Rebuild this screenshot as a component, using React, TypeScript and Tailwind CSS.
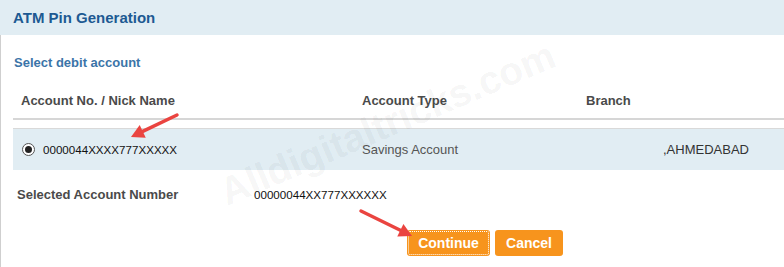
import { useState } from 'react';

const Arrow = ({ x1, y1, x2, y2 }: { x1: number; y1: number; x2: number; y2: number }) => {
  const a = Math.atan2(y2 - y1, x2 - x1);
  const len = 13;
  const w = 7;
  const bx = x2 - len * Math.cos(a);
  const by = y2 - len * Math.sin(a);
  const px = -Math.sin(a) * w;
  const py = Math.cos(a) * w;
  return (
    <g>
      <line x1={x1} y1={y1} x2={bx} y2={by} stroke="#ea4440" strokeWidth={3.5} strokeLinecap="round" />
      <polygon points={`${x2},${y2} ${bx + px},${by + py} ${bx - px},${by - py}`} fill="#ea4440" />
    </g>
  );
};

const App = () => {
  const [selected, setSelected] = useState(true);

  return (
    <div className="relative w-[784px] h-[267px] overflow-hidden bg-white font-['Liberation_Sans',Arial,sans-serif]">
      {/* Header */}
      <div className="h-[35px] bg-[#e1edf3] flex items-center pl-[13px]">
        <h1 className="text-[15px] leading-[18px] font-bold text-[#1d5a92]">ATM Pin Generation</h1>
      </div>

      <div className="h-[232px] border-l border-[#cfcfcf]">
        <div className="pl-[13px] pt-[18px] text-[13px] leading-[19px] font-bold text-[#3b74a8]">Select debit account</div>

        {/* Table */}
        <div className="ml-[12px] mt-[19px]">
          <div className="grid grid-cols-[349px_224px_1fr] h-[29px] items-start border-b-2 border-[#d6d6d6] text-[13px] leading-[19px] font-bold text-[#4a4a4a]">
            <div className="pl-[8px]">Account No. / Nick Name</div>
            <div>Account Type</div>
            <div>Branch</div>
          </div>
          <div className="mt-[8px] grid grid-cols-[349px_224px_1fr] h-[42px] items-center bg-[#e1edf3] border-t border-[#d9d9d9]">
            <label className="flex items-center pl-[9px] text-[11.6px] text-[#111]">
              <span
                onClick={() => setSelected(!selected)}
                className="w-[13px] h-[13px] rounded-full border border-[#555] bg-white flex items-center justify-center"
              >
                {selected && <span className="w-[7px] h-[7px] rounded-full bg-[#222]" />}
              </span>
              <span className="ml-[8px]">0000044XXXX777XXXXX</span>
            </label>
            <div className="text-[13px] text-[#555]">Savings Account</div>
            <div className="pl-[77px] text-[13px] text-[#333]">,AHMEDABAD</div>
          </div>
        </div>

        {/* Selected account */}
        <div className="flex items-center mt-[16px] h-[18px]">
          <div className="w-[253px] pl-[16px] text-[13px] font-bold text-[#4a4a4a]">Selected Account Number</div>
          <div className="text-[11.6px] text-[#111]">00000044XX777XXXXXX</div>
        </div>

        {/* Buttons */}
        <div className="flex gap-[5px] mt-[26px] pl-[406px]">
          <button className="w-[83px] h-[26px] rounded-[3px] bg-[#f7941d] text-white text-[14px] font-bold outline-1 outline-dotted outline-white -outline-offset-2">
            Continue
          </button>
          <button className="w-[68px] h-[26px] rounded-[3px] bg-[#f7941d] text-white text-[14px] font-bold">
            Cancel
          </button>
        </div>
      </div>

      {/* Watermark */}
      <div className="absolute left-[222px] top-[165px] -rotate-[23deg] origin-left text-[39px] font-bold text-black/[0.05] whitespace-nowrap pointer-events-none">
        Alldigitaltricks.com
      </div>

      {/* Annotation arrows */}
      <svg className="absolute inset-0 pointer-events-none" width={784} height={267}>
        <Arrow x1={177} y1={115} x2={131} y2={137} />
        <Arrow x1={361} y1={211} x2={412} y2={236} />
      </svg>
    </div>
  );
};

export default App;
